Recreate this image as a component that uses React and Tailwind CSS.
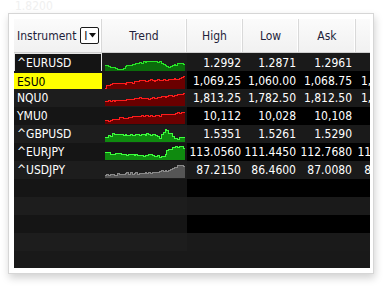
import React from 'react';

const FONT = { fontFamily: '"DejaVu Sans Condensed", "DejaVu Sans", Tahoma, sans-serif' };

// tiny seeded noise so every sparkline is jagged but stable
const spark = (anchors, seed, n = 44) => {
  let s = seed;
  const rnd = () => {
    s = (s * 9301 + 49297) % 233280;
    return s / 233280;
  };
  const pts = [];
  for (let i = 0; i <= n; i++) {
    const t = i / n;
    let j = 0;
    while (j < anchors.length - 2 && anchors[j + 1][0] < t) j++;
    const [x0, y0] = anchors[j];
    const [x1, y1] = anchors[j + 1];
    const v = y0 + (y1 - y0) * ((t - x0) / (x1 - x0)) + (rnd() - 0.5) * 0.14;
    pts.push(Math.min(1, Math.max(0.06, v)));
  }
  return pts;
};

const palettes = {
  darkGreen: { fill: '#0b6b0b', line: '#27e627' },
  green: { fill: '#0f8a0f', line: '#3cff3c' },
  red: { fill: '#6a0000', line: '#ff1c1c' },
  gray: { fill: '#555555', line: '#8a8a8a' },
};

const Sparkline = ({ values, color }) => {
  const W = 80;
  const H = 15;
  const step = W / (values.length - 1);
  const ys = values.map((v) => Math.round(H - v * (H - 2) - 1));
  let line = `M0 ${ys[0]}`;
  ys.forEach((y, i) => {
    if (i === 0) return;
    line += ` H${(i * step).toFixed(1)} V${y}`;
  });
  const fill = `${line} V${H} H0 Z`;
  const p = palettes[color];
  return (
    <svg width={W} height={H} viewBox={`0 0 ${W} ${H}`} shapeRendering="crispEdges">
      <path d={fill} fill={p.fill} />
      <path d={line} fill="none" stroke={p.line} strokeWidth="1" />
    </svg>
  );
};

const rows = [
  {
    name: '^EURUSD', high: '1.2992', low: '1.2871', ask: '1.2961', last: '1.2962', color: 'darkGreen',
    trend: spark([[0, 0.45], [0.12, 0.3], [0.18, 0.12], [0.3, 0.45], [0.45, 0.7], [0.55, 0.78], [0.7, 0.72], [0.78, 0.3], [0.88, 0.5], [0.95, 0.65], [1, 0.45]], 11),
  },
  {
    name: 'ESU0', high: '1,069.25', low: '1,060.00', ask: '1,068.75', last: '1,069.00', color: 'red', flag: true,
    trend: spark([[0, 0.15], [0.1, 0.45], [0.3, 0.5], [0.45, 0.65], [0.6, 0.7], [0.75, 0.7], [0.9, 0.85], [1, 1]], 23),
  },
  {
    name: 'NQU0', high: '1,813.25', low: '1,782.50', ask: '1,812.50', last: '1,813.00', color: 'red',
    trend: spark([[0, 0.3], [0.2, 0.35], [0.35, 0.5], [0.5, 0.55], [0.65, 0.55], [0.8, 0.75], [0.9, 0.8], [1, 1]], 37),
  },
  {
    name: 'YMU0', high: '10,112', low: '10,028', ask: '10,108', last: '10,110', color: 'red',
    trend: spark([[0, 0.15], [0.15, 0.35], [0.3, 0.45], [0.45, 0.6], [0.6, 0.55], [0.75, 0.7], [0.9, 0.75], [1, 0.95]], 41),
  },
  {
    name: '^GBPUSD', high: '1.5351', low: '1.5261', ask: '1.5290', last: '1.5292', color: 'green',
    trend: spark([[0, 0.3], [0.1, 0.55], [0.3, 0.5], [0.5, 0.55], [0.62, 0.55], [0.68, 0.2], [0.75, 0.9], [0.82, 0.55], [0.88, 0.15], [0.95, 0.35], [1, 0.3]], 53),
  },
  {
    name: '^EURJPY', high: '113.0560', low: '111.4450', ask: '112.7680', last: '112.7700', color: 'green',
    trend: spark([[0, 0.5], [0.2, 0.4], [0.4, 0.35], [0.6, 0.3], [0.72, 0.2], [0.8, 0.85], [0.9, 0.95], [1, 0.9]], 67),
  },
  {
    name: '^USDJPY', high: '87.2150', low: '86.4600', ask: '87.0080', last: '87.0100', color: 'gray',
    trend: spark([[0, 0.15], [0.3, 0.3], [0.55, 0.35], [0.7, 0.45], [0.8, 0.55], [0.88, 0.75], [0.93, 0.95], [1, 0.8]], 79),
  },
];

const GRID = 'grid grid-cols-[88px_85px_56px_56px_57px_56px]';

const FilterButton = () => (
  <span className="ml-[4px] inline-flex h-[17px] w-[19px] items-center justify-center gap-[1px] rounded-[2px] border border-[#1a1a1a] bg-white">
    <span className="text-[12px] leading-none text-[#111]">I</span>
    <svg width="7" height="5" viewBox="0 0 7 5">
      <path d="M0 0 H7 L3.5 4.5 Z" fill="#111" />
    </svg>
  </span>
);

const HeaderCell = ({ children, className = '' }) => (
  <div className={`flex h-full items-center border-r border-[#d9d9d9] shadow-[inset_-1px_0_0_#ffffff] ${className}`}>
    {children}
  </div>
);

const App = () => {
  const blanks = Array.from({ length: 4 });

  return (
    <div className="h-[288px] w-[385px] overflow-hidden bg-white" style={FONT}>
      <div className="h-[13px] pl-[15px] text-[12px] leading-[13px] text-[#f0f0f0]">1.8200</div>

      <div className="ml-[8px] h-[261px] w-[366px] border border-[#d6d6d6] bg-white pb-[5px] pl-[5px] pr-[3px] pt-[5px] shadow-[1px_4px_8px_rgba(0,0,0,0.18)]">
        <div className="flex h-full w-[356px] flex-col overflow-hidden">
          {/* Column headers */}
          <div className={`${GRID} h-[34px] shrink-0 border-b border-[#cfcfcf] bg-gradient-to-b from-[#fbfbfb] to-[#f1f1f1] text-[12px] text-[#1e1e3a]`}>
            <HeaderCell className="pl-[3px]">
              Instrument
              <FilterButton />
            </HeaderCell>
            <HeaderCell className="justify-center">Trend</HeaderCell>
            <HeaderCell className="justify-center">High</HeaderCell>
            <HeaderCell className="justify-center">Low</HeaderCell>
            <HeaderCell className="justify-center">Ask</HeaderCell>
            <HeaderCell className="justify-center" />
          </div>

          {/* Quote rows */}
          <div className="flex-1 bg-[#191919] text-[12px] text-white">
            {rows.map((r, i) => {
              const odd = i % 2 === 0;
              const left = odd ? 'bg-[#1d1d1d]' : 'bg-[#151515]';
              const right = odd ? 'bg-[#1a1a1a]' : 'bg-black';
              return (
                <div key={r.name} className={`${GRID} h-[18px]`}>
                  {i === 0 ? (
                    <div className="flex items-center border border-[#e6e6e6] bg-[#141414] pl-[2px]">{r.name}</div>
                  ) : r.flag ? (
                    <div className={`${left} pt-[2px]`}>
                      <div className="flex h-full items-center bg-[#ffff00] pl-[3px] text-black">{r.name}</div>
                    </div>
                  ) : (
                    <div className={`flex items-center pl-[3px] ${left}`}>{r.name}</div>
                  )}
                  <div className={`flex items-end pb-[1px] pl-[3px] ${left}`}>
                    <Sparkline values={r.trend} color={r.color} />
                  </div>
                  <div className={`flex items-center justify-end pr-[2px] ${right}`}>{r.high}</div>
                  <div className={`flex items-center justify-end pr-[3px] ${right}`}>{r.low}</div>
                  <div className={`flex items-center justify-end pr-[4px] ${right}`}>{r.ask}</div>
                  <div className={`flex items-center justify-end pr-[3px] ${right}`}>{r.last}</div>
                </div>
              );
            })}
            {blanks.map((_, k) => {
              const odd = (rows.length + k) % 2 === 0;
              return (
                <div key={k} className={`${GRID} h-[18px]`}>
                  <div className={`col-span-2 ${odd ? 'bg-[#1d1d1d]' : 'bg-[#151515]'}`} />
                  <div className={`col-span-4 ${odd ? 'bg-[#1a1a1a]' : 'bg-black'}`} />
                </div>
              );
            })}
          </div>
        </div>
      </div>
    </div>
  );
};

export default App;
